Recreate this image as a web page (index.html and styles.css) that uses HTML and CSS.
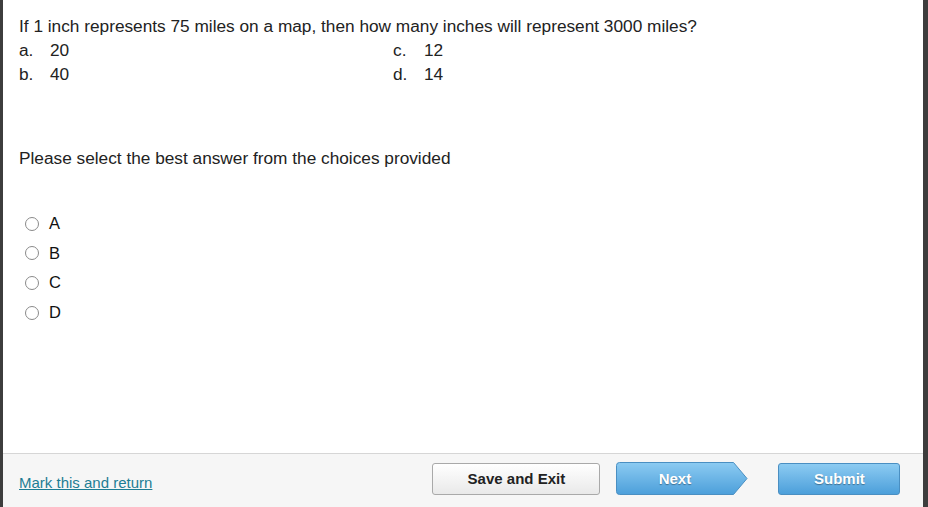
FILE: index.html
```html
<!DOCTYPE html>
<html>
<head>
<meta charset="utf-8">
<link rel="stylesheet" href="styles.css">
</head>
<body>
<div class="frame">
  <main class="content">
    <p class="question">If 1 inch represents 75 miles on a map, then how many inches will represent 3000 miles?</p>
    <div class="choices">
      <div class="choice"><span class="letter">a.</span><span>20</span></div>
      <div class="choice"><span class="letter">c.</span><span>12</span></div>
      <div class="choice"><span class="letter">b.</span><span>40</span></div>
      <div class="choice"><span class="letter">d.</span><span>14</span></div>
    </div>
    <p class="prompt">Please select the best answer from the choices provided</p>
    <div class="radios">
      <label class="radio"><span class="circle"></span><span>A</span></label>
      <label class="radio"><span class="circle"></span><span>B</span></label>
      <label class="radio"><span class="circle"></span><span>C</span></label>
      <label class="radio"><span class="circle"></span><span>D</span></label>
    </div>
  </main>
  <footer class="footer">
    <a class="mark" href="#">Mark this and return</a>
    <div class="buttons">
      <button class="btn save">Save and Exit</button>
      <button class="btn next">
        <svg class="next-shape" width="132" height="33" viewBox="0 0 132 33" preserveAspectRatio="none">
          <defs>
            <linearGradient id="bg" x1="0" y1="0" x2="0" y2="1">
              <stop offset="0" stop-color="#8ccbf2"/>
              <stop offset="1" stop-color="#4c9fda"/>
            </linearGradient>
          </defs>
          <path d="M3.5 0.5 H117.5 L131 16.5 L117.5 32.5 H3.5 Q0.5 32.5 0.5 29.5 V3.5 Q0.5 0.5 3.5 0.5 Z" fill="url(#bg)" stroke="#4a8fc2" stroke-width="1"/>
        </svg>
        <span class="next-text">Next</span>
      </button>
      <button class="btn submit">Submit</button>
    </div>
  </footer>
</div>
</body>
</html>
```
FILE: styles.css
```css
* { box-sizing: border-box; }
html, body { margin: 0; padding: 0; }
body {
  width: 928px;
  height: 507px;
  overflow: hidden;
  background: #3d3d3d;
  font-family: "Liberation Sans", Arial, sans-serif;
  color: #222;
}
.frame {
  margin-left: 3px;
  width: 920px;
  height: 507px;
  background: #fff;
  display: flex;
  flex-direction: column;
}
.content {
  flex: 1;
  padding: 16px 16px 0 16px;
}
.question {
  margin: 0;
  font-size: 17.25px;
  line-height: 21px;
}
.choices {
  display: grid;
  grid-template-columns: 374px 200px;
  margin-top: 1px;
}
.choice {
  font-size: 17.25px;
  line-height: 24px;
  display: flex;
}
.letter { width: 31px; }
.prompt {
  margin: 62px 0 0 0;
  font-size: 17.25px;
  line-height: 21px;
}
.radios {
  margin-top: 40px;
  display: flex;
  flex-direction: column;
}
.radio {
  display: flex;
  align-items: center;
  height: 29.6px;
  font-size: 16.5px;
  color: #111;
}
.circle {
  width: 14px;
  height: 14px;
  border: 1px solid #8a8a8a;
  border-radius: 50%;
  background: #fff;
  margin: 0 10px 0 6px;
}
.footer {
  height: 54px;
  border-top: 1px solid #d6d6d6;
  background: #f6f6f6;
  display: flex;
  align-items: center;
  padding: 0 0 0 16px;
}
.mark {
  font-size: 15px;
  color: #1d7d94;
  text-decoration: underline;
  margin-top: 3px;
}
.buttons {
  margin-left: 280px;
  display: flex;
  align-items: center;
  margin-top: -4px;
}
.btn {
  height: 32px;
  font-family: "Liberation Sans", Arial, sans-serif;
  font-weight: bold;
  font-size: 15px;
  border-radius: 3px;
  padding: 0;
  cursor: pointer;
}
.save {
  width: 168px;
  border: 1px solid #a9a9a9;
  background: linear-gradient(#ffffff, #e9e9e9);
  color: #222;
}
.next {
  position: relative;
  width: 132px;
  height: 33px;
  margin-left: 16px;
  border: none;
  background: none;
  color: #fff;
}
.next-shape { position: absolute; left: 0; top: 0; }
.next-text {
  position: relative;
  display: block;
  width: 117px;
  text-align: center;
  text-shadow: 0 1px 1px rgba(0,0,0,0.35);
}
.submit {
  width: 122px;
  margin-left: 30px;
  border: 1px solid #4a8fc2;
  background: linear-gradient(#8ccbf2, #4c9fda);
  color: #fff;
  text-shadow: 0 1px 1px rgba(0,0,0,0.35);
}
```
